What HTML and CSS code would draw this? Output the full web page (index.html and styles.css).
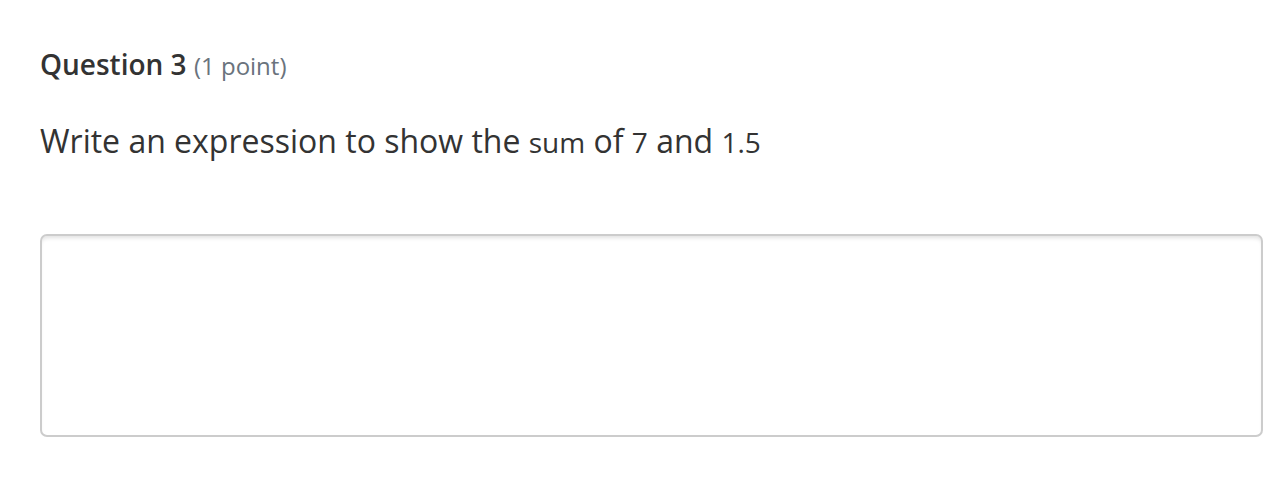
FILE: index.html
```html
<!DOCTYPE html>
<html>
<head>
<meta charset="utf-8">
<link rel="stylesheet" href="styles.css">
</head>
<body>
<div class="question">
  <h2 class="q-title">Question 3 <span class="points">(1 point)</span></h2>
  <p class="q-text">Write an expression to show the <span class="math">sum</span> of <span class="math">7</span> and <span class="math">1.5</span></p>
  <div class="answer" contenteditable="true"></div>
</div>
</body>
</html>
```
FILE: styles.css
```css
html, body {
  margin: 0;
  padding: 0;
  background: #fff;
}
body {
  font-family: "Open Sans", "DejaVu Sans", sans-serif;
  color: #333;
}
.question {
  padding: 45px 7px 0 40px;
}
.q-title {
  margin: 0;
  font-size: 28px;
  font-weight: 600;
  line-height: 38px;
  color: #333;
}
.points {
  font-size: 24px;
  font-weight: 400;
  color: #6a737d;
}
.q-text {
  margin: 34px 0 0 0;
  font-size: 32px;
  line-height: 44px;
  color: #333;
}
.math {
  font-size: 28px;
}
.answer {
  margin-top: 70px;
  height: 199px;
  border: 2px solid #ccc;
  border-radius: 7px;
  box-shadow: inset 0 4px 4px -2px rgba(0,0,0,0.12);
  outline: none;
}
```
